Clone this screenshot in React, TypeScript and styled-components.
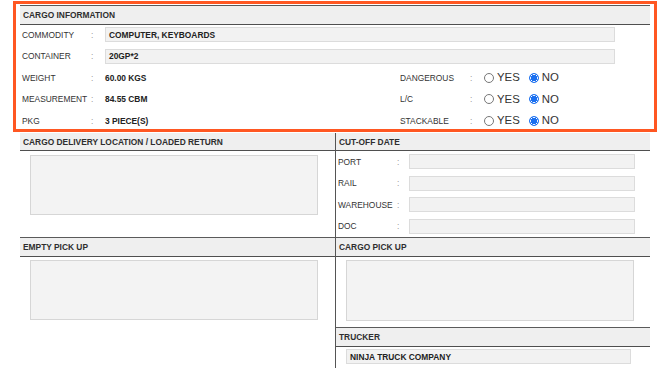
import React from "react";
import styled, { createGlobalStyle } from "styled-components";

const GlobalStyle = createGlobalStyle`
  html, body { margin: 0; padding: 0; background: #fff; }
  body { font-family: "Liberation Sans", Arial, sans-serif; }
  * { box-sizing: border-box; }
`;

const Page = styled.div`
  width: 670px;
  height: 368px;
  overflow: hidden;
  padding: 1px 0 0 13px;
  background: #fff;
  color: #333;
`;

const Highlight = styled.div`
  width: 644px;
  height: 131px;
  border: 3px solid #ff5722;
  padding: 1px 4px 0 4px;
`;

const SectionHeader = styled.div<{ $noTop?: boolean }>`
  height: ${(p) => (p.$noTop ? "18px" : "20px")};
  background: #efefef;
  border-top: ${(p) => (p.$noTop ? "none" : "1px solid #5a5a5a")};
  border-bottom: 1px solid #4f4f4f;
  display: flex;
  align-items: center;
  padding-left: 3px;
  font-size: 8.4px;
  font-weight: bold;
  color: #2e2e2e;
  white-space: nowrap;
`;

const CargoRows = styled.div`
  margin-top: -1px;
`;

const CargoRow = styled.div`
  display: grid;
  grid-template-columns: 69px 14px 295px 70px 13px 1fr;
  align-items: center;
  height: 21.5px;
  padding-left: 2px;
`;

const Label = styled.span`
  font-size: 8.4px;
  color: #333;
  white-space: nowrap;
`;

const Colon = styled.span`
  font-size: 8.4px;
  color: #999;
`;

const Value = styled.span`
  font-size: 8.4px;
  font-weight: bold;
  color: #222;
  white-space: nowrap;
`;

const FieldBox = styled.div<{ $span?: boolean; $w?: number }>`
  ${(p) => (p.$span ? "grid-column: 3 / 7;" : "")}
  width: ${(p) => (p.$w ? `${p.$w}px` : "100%")};
  height: 15px;
  background: #f2f2f2;
  border: 1px solid #dcdcdc;
  display: flex;
  align-items: center;
  padding-left: 3px;
  font-size: 8.4px;
  font-weight: bold;
  color: #222;
  white-space: nowrap;
`;

const RadioGroup = styled.div`
  display: flex;
  align-items: center;
  padding-left: 1px;
`;

const RadioDot = styled.span<{ $checked?: boolean }>`
  width: 10px;
  height: 10px;
  border-radius: 50%;
  flex: none;
  border: 1px solid ${(p) => (p.$checked ? "#1a6ff0" : "#777")};
  background: ${(p) =>
    p.$checked
      ? "radial-gradient(circle, #1a6ff0 0 3px, #fff 3.3px 3.6px, #1a6ff0 3.9px)"
      : "#fff"};
`;

const RadioText = styled.span<{ $gap: number }>`
  font-size: 11.4px;
  color: #333;
  margin-left: 3px;
  margin-right: ${(p) => p.$gap}px;
  line-height: 1;
`;

const BottomGrid = styled.div`
  display: grid;
  grid-template-columns: 315px 315px;
  margin: 1px 0 0 7px;
  height: 235px;
`;

const Column = styled.div<{ $divider?: boolean }>`
  display: flex;
  flex-direction: column;
  border-left: ${(p) => (p.$divider ? "1px solid #555" : "none")};
`;

const Body = styled.div<{ $h: number; $pt: number }>`
  height: ${(p) => p.$h}px;
  padding: ${(p) => p.$pt}px 0 0 10px;
`;

const TextArea = styled.div<{ $w: number; $h: number }>`
  width: ${(p) => p.$w}px;
  height: ${(p) => p.$h}px;
  background: #f3f3f3;
  border: 1px solid #d6d6d6;
`;

const CutoffRow = styled.div`
  display: grid;
  grid-template-columns: 59px 12px 226px;
  align-items: center;
  height: 21.5px;
  padding-left: 2px;
`;

type Radio = { label: string; yes: boolean };

const radios: Radio[] = [
  { label: "DANGEROUS", yes: false },
  { label: "L/C", yes: false },
  { label: "STACKABLE", yes: false },
];

const leftRows = [
  { label: "WEIGHT", value: "60.00 KGS" },
  { label: "MEASUREMENT", value: "84.55 CBM" },
  { label: "PKG", value: "3 PIECE(S)" },
];

const cutoffs = ["PORT", "RAIL", "WAREHOUSE", "DOC"];

export default function App() {
  return (
    <>
      <GlobalStyle />
      <Page>
        <Highlight>
          <SectionHeader>CARGO INFORMATION</SectionHeader>
          <CargoRows>
            <CargoRow>
              <Label>COMMODITY</Label>
              <Colon>:</Colon>
              <FieldBox $span $w={510}>COMPUTER, KEYBOARDS</FieldBox>
            </CargoRow>
            <CargoRow>
              <Label>CONTAINER</Label>
              <Colon>:</Colon>
              <FieldBox $span $w={510}>20GP*2</FieldBox>
            </CargoRow>
            {leftRows.map((r, i) => (
              <CargoRow key={r.label}>
                <Label>{r.label}</Label>
                <Colon>:</Colon>
                <Value>{r.value}</Value>
                <Label>{radios[i].label}</Label>
                <Colon>:</Colon>
                <RadioGroup>
                  <RadioDot $checked={radios[i].yes} />
                  <RadioText $gap={9}>YES</RadioText>
                  <RadioDot $checked={!radios[i].yes} />
                  <RadioText $gap={0}>NO</RadioText>
                </RadioGroup>
              </CargoRow>
            ))}
          </CargoRows>
        </Highlight>
        <BottomGrid>
          <Column>
            <SectionHeader $noTop>CARGO DELIVERY LOCATION / LOADED RETURN</SectionHeader>
            <Body $h={86} $pt={4}>
              <TextArea $w={288} $h={60} />
            </Body>
            <SectionHeader>EMPTY PICK UP</SectionHeader>
            <Body $h={100} $pt={3}>
              <TextArea $w={288} $h={60} />
            </Body>
          </Column>
          <Column $divider>
            <SectionHeader $noTop>CUT-OFF DATE</SectionHeader>
            {cutoffs.map((c) => (
              <CutoffRow key={c}>
                <Label>{c}</Label>
                <Colon>:</Colon>
                <FieldBox $w={226} />
              </CutoffRow>
            ))}
            <SectionHeader>CARGO PICK UP</SectionHeader>
            <Body $h={70} $pt={3}>
              <TextArea $w={288} $h={61} />
            </Body>
            <SectionHeader>TRUCKER</SectionHeader>
            <Body $h={20} $pt={2}>
              <FieldBox $w={285}>NINJA TRUCK COMPANY</FieldBox>
            </Body>
          </Column>
        </BottomGrid>
      </Page>
    </>
  );
}
